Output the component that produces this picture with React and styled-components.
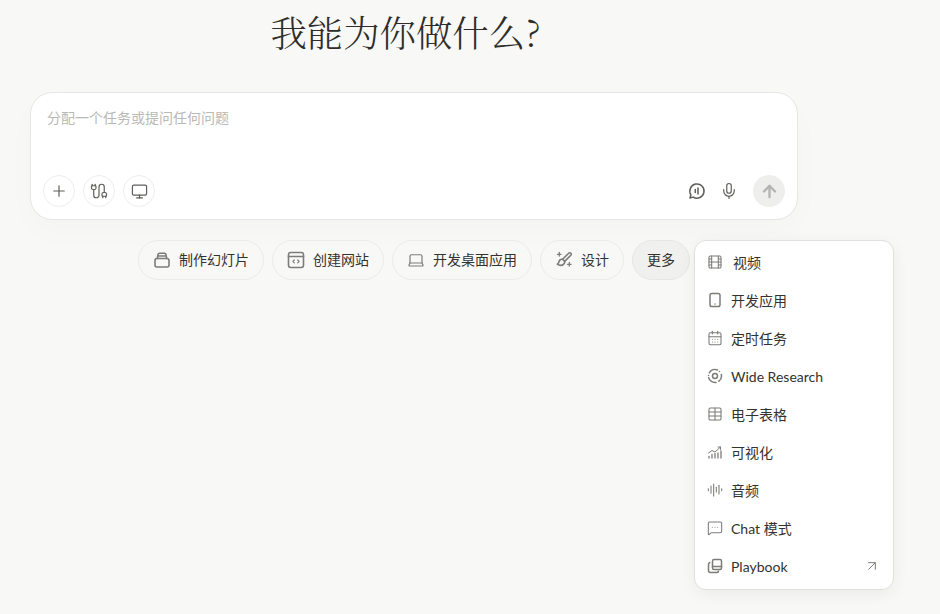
import React from "react";
import styled, { createGlobalStyle } from "styled-components";
import { Plus, Cable, Monitor, Mic, ArrowUp, Laptop, Film, CalendarDays, Table, AudioLines, MessageSquareMore, ArrowUpRight } from "lucide-react";

const Global = createGlobalStyle`
  html, body { margin: 0; padding: 0; background: #f8f8f7; }
  body { font-family: Lato, "Noto Sans CJK SC", sans-serif; color: #34322d; overflow: hidden; }
`;
const Page = styled.main`
  width: 768px;
  height: 614px;
  margin-left: 30px;
  display: flex;
  flex-direction: column;
`;
const Title = styled.h1`
  margin: 9px 17px 0 0;
  height: 83px;
  font: 300 36.4px/44px "Noto Serif CJK SC", "Liberation Serif", "Noto Sans CJK SC", serif;
  text-align: center;
  color: #2f2d29;
`;
const Composer = styled.section`
  box-sizing: border-box;
  height: 128px;
  background: #fff;
  border: 1px solid #e6e6e4;
  border-radius: 22px;
  box-shadow: 0 12px 32px rgba(0, 0, 0, 0.02);
  padding: 15px 12px 12px;
  display: flex;
  flex-direction: column;
  justify-content: space-between;
`;
const Placeholder = styled.div`
  padding-left: 4px;
  font-size: 14px;
  line-height: 20px;
  color: #b9b9b7;
`;
const Toolbar = styled.div`
  display: flex;
  align-items: center;
  gap: 8px;
`;
const RoundButton = styled.button`
  width: 32px;
  height: 32px;
  padding: 0;
  border: 1px solid #eeeeec;
  border-radius: 50%;
  background: #fff;
  color: #5e5e5b;
  display: flex;
  align-items: center;
  justify-content: center;
`;
const Spacer = styled.div`
  flex: 1;
`;
const IconGroup = styled.div`
  display: flex;
`;
const PlainIcon = styled.span`
  width: 32px;
  height: 32px;
  color: #5e5e5b;
  display: flex;
  align-items: center;
  justify-content: center;
`;
const SendButton = styled.button`
  width: 32px;
  height: 32px;
  padding: 0;
  border: 0;
  border-radius: 50%;
  background: #eeeeec;
  color: #b4b4b2;
  display: flex;
  align-items: center;
  justify-content: center;
`;
const Chips = styled.div`
  margin-top: 20px;
  display: flex;
  justify-content: center;
  gap: 8px;
`;
const ChipSlot = styled.div`
  position: relative;
`;
const Chip = styled.button`
  box-sizing: border-box;
  height: 40px;
  padding: 0 14px 1px;
  border: 1px solid ${(p) => (p.$active ? "#e6e6e4" : "#ebebe9")};
  border-radius: 20px;
  background: ${(p) => (p.$active ? "#f0f0ee" : "#f8f8f7")};
  color: #34322d;
  font: 400 14px/20px Lato, "Noto Sans CJK SC", sans-serif;
  display: flex;
  align-items: center;
  gap: 8px;
  white-space: nowrap;
  svg { color: #7c7c79; flex: none; }
`;
const Menu = styled.nav`
  position: absolute;
  left: calc(100% + 4px);
  top: 0;
  z-index: 2;
  box-sizing: border-box;
  width: 200px;
  padding: 2px 0 4px;
  background: #fff;
  border: 1px solid #e0e0de;
  border-radius: 12px;
  box-shadow: 0 4px 16px rgba(0, 0, 0, 0.06);
`;
const MenuItem = styled.div`
  height: 38px;
  padding: 0 13px 0 12px;
  display: flex;
  align-items: center;
  gap: ${(p) => p.$gap || 8}px;
  font-size: 14px;
  color: #34322d;
  white-space: nowrap;
  svg { color: #7c7c79; flex: none; }
`;
const Trail = styled.span`
  margin-left: auto;
  display: flex;
`;

const Svg = ({ size = 18, box = 18, sw = 1.5, children }) => (
  <svg width={size} height={size} viewBox={`0 0 ${box} ${box}`} fill="none" stroke="currentColor" strokeWidth={sw} strokeLinecap="round" strokeLinejoin="round">
    {children}
  </svg>
);
const SlidesIcon = () => (
  <Svg sw={1.6}>
    <rect x="2" y="7.500" width="14" height="8.500" rx="2" />
    <path d="M4.300 7.500 5 3.600A1.500 1.500 0 0 1 6.500 2.300h5A1.500 1.500 0 0 1 13 3.600l.7 3.900M4.800 5h8.400" />
  </Svg>
);
const CodeIcon = () => (
  <Svg sw={1.6}>
    <rect x="1.500" y="1.500" width="15" height="15" rx="2.200" />
    <path d="M1.500 5.500h15" />
    <path d="M7.300 9 5.900 10.400l1.400 1.400M10.700 9l1.400 1.400-1.400 1.400" strokeWidth="1.200" />
  </Svg>
);
const WandIcon = () => (
  <Svg size={18} sw={1.6}>
    <path d="M15.800 2.200c-.6-.6-1.500-.5-2.100 0L7.600 8.300l2.100 2.100 6.100-6.100c.5-.6.6-1.500 0-2.100Z" />
    <path d="M7.600 8.300c-1.900-.3-3.300.8-3.600 2.500-.2 1.100-.8 1.800-1.700 2.400 1.900 1.500 4.900 1.600 6.400-.1 1-1 1.300-1.900 1-3" />
    <path d="M4.300 1.500v3.600M2.500 3.300h3.600M14.300 11.500v3.600M12.500 13.300h3.600" strokeWidth="1.300" />
  </Svg>
);
const ChatVoiceIcon = () => (
  <Svg size={18}>
    <path d="M2 16 2.900 12.800A7.100 7.100 0 1 1 5.200 15.100Z" />
    <path d="M7.300 7.500v3M10 6v6" />
  </Svg>
);
const PhoneIcon = () => (
  <Svg size={16} box={16}>
    <rect x="3" y="1.500" width="10" height="13" rx="1.800" />
    <path d="M8 12h.01" />
  </Svg>
);
const ResearchIcon = () => (
  <Svg size={16} box={16}>
    <path d="M2.300 4.800A6.500 6.500 0 0 1 10.500 2M14.300 6.500a6.500 6.500 0 0 1-2.400 6.700M9 14.400a6.500 6.500 0 0 1-7.300-4.700" />
    <circle cx="8" cy="8" r="2.500" />
    <path d="M1.500 7.500h.01M12.500 3.500h.01" />
  </Svg>
);
const ChartIcon = () => (
  <Svg size={16} box={16} sw={1.3}>
    <path d="M2 14v-1.500M5 14v-3.500M8 14V9.500M11 14V9M14 14V7" />
    <path d="M1.500 9 5 6.500l3 1.500 5.500-5M11 3h2.500v2.500" strokeWidth="1" />
  </Svg>
);
const PlaybookIcon = () => (
  <Svg size={16} box={16}>
    <rect x="5.500" y="1.500" width="9" height="10" rx="1.500" />
    <path d="M5.500 8.500h9M2.800 4.500c-.8.300-1.300.9-1.300 1.800v6.200c0 1 .8 2 2 2h6.200c.9 0 1.600-.5 1.800-1.300" />
  </Svg>
);

const chips = [
  [<SlidesIcon key="i" />, "制作幻灯片"],
  [<CodeIcon key="i" />, "创建网站"],
  [<Laptop key="i" size={18} strokeWidth={1.6} />, "开发桌面应用"],
  [<WandIcon key="i" />, "设计"],
];
const ic = { size: 16, strokeWidth: 1.6 };
const items = [
  [<Film key="i" {...ic} />, "视频", 10],
  [<PhoneIcon key="i" />, "开发应用"],
  [<CalendarDays key="i" {...ic} />, "定时任务"],
  [<ResearchIcon key="i" />, "Wide Research"],
  [<Table key="i" {...ic} />, "电子表格"],
  [<ChartIcon key="i" />, "可视化"],
  [<AudioLines key="i" {...ic} />, "音频"],
  [<MessageSquareMore key="i" {...ic} />, "Chat 模式"],
  [<PlaybookIcon key="i" />, "Playbook"],
];

export default function App() {
  return (
    <Page>
      <Global />
      <Title>我能为你做什么?</Title>
      <Composer>
        <Placeholder>分配一个任务或提问任何问题</Placeholder>
        <Toolbar>
          <RoundButton><Plus size={18} strokeWidth={1.6} /></RoundButton>
          <RoundButton><Cable size={18} strokeWidth={1.6} /></RoundButton>
          <RoundButton><Monitor size={17} strokeWidth={1.7} /></RoundButton>
          <Spacer />
          <IconGroup>
            <PlainIcon><ChatVoiceIcon /></PlainIcon>
            <PlainIcon><Mic size={18} strokeWidth={1.6} /></PlainIcon>
          </IconGroup>
          <SendButton><ArrowUp size={19} strokeWidth={3} /></SendButton>
        </Toolbar>
      </Composer>
      <Chips>
        {chips.map(([icon, label]) => (
          <Chip key={label}>{icon}{label}</Chip>
        ))}
        <ChipSlot>
          <Chip $active>更多</Chip>
          <Menu>
            {items.map(([icon, label, gap]) => (
              <MenuItem key={label} $gap={gap}>
                {icon}
                {label}
                {label === "Playbook" && <Trail><ArrowUpRight size={16} strokeWidth={1.5} /></Trail>}
              </MenuItem>
            ))}
          </Menu>
        </ChipSlot>
      </Chips>
    </Page>
  );
}
